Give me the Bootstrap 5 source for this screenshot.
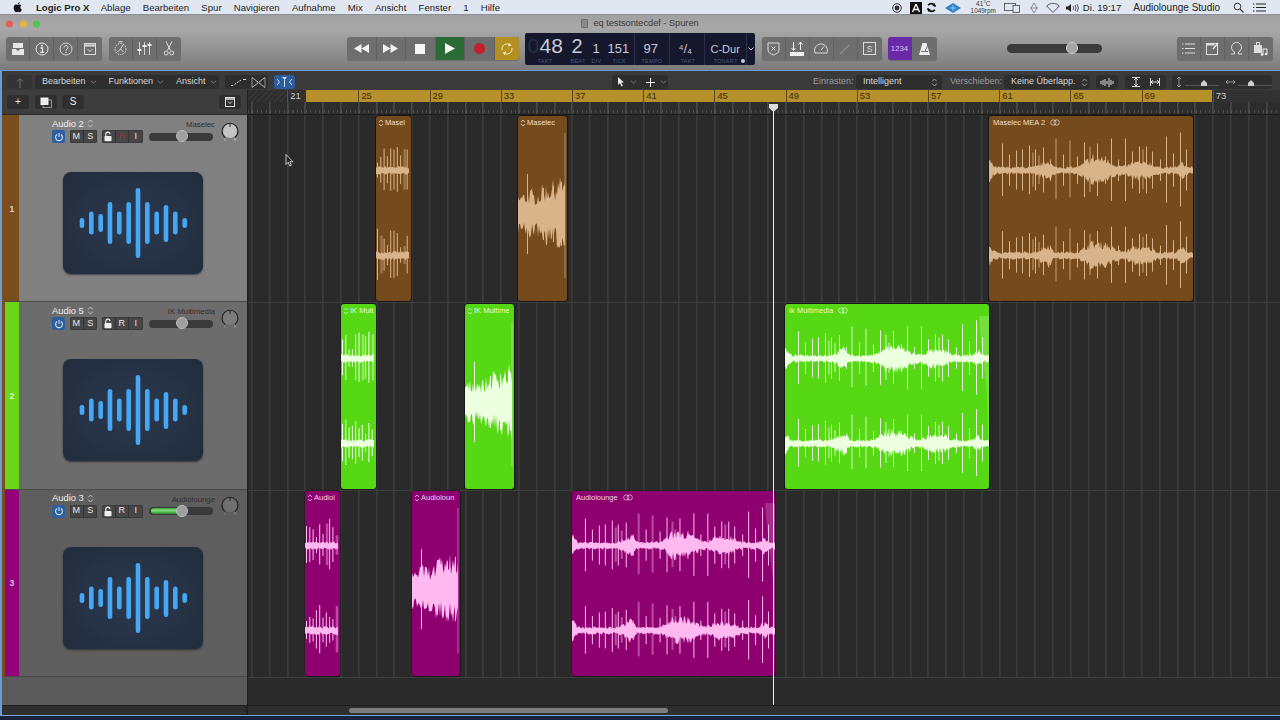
<!doctype html>
<html lang="de"><head><meta charset="utf-8"><title>Logic Pro X</title>
<link href="https://cdn.jsdelivr.net/npm/bootstrap@5.3.0/dist/css/bootstrap.min.css" rel="stylesheet">
<style>
html,body{height:720px;overflow:hidden;margin:0;background:#16233a}
body{font-family:"Liberation Sans",Arial,sans-serif;font-size:10px;color:#eee}
.lp-app{width:1280px;height:720px}
svg{display:block;flex:none}
.lp-menu{height:15px;background:#e1e7f1;color:#222;font-size:9.6px;border-bottom:1px solid #8b8f99;line-height:14px;padding-top:1px;flex:none}
.lp-menu b{font-weight:700;margin-right:11.4px}
.lp-apple{margin:-1px 12px 0 12px}
.lp-mi{margin-right:12.2px;white-space:nowrap}
.lp-temp{font-size:6.4px;line-height:7px;color:#333;margin:-1px 8px 0 10px}
.lp-tbar{height:55px;background:linear-gradient(#a0a0a0,#a9a9a9 22%,#949494 60%,#7b7b7b);flex:none}
.lp-titlerow{height:17px;padding-top:1px}
.lp-lights{gap:6.5px;padding-left:6px}
.lp-light{width:7px;height:7px;border-radius:50%}
.lp-title{font-size:9.2px;color:#3a3a3a;gap:5px}
.lp-doc{width:7px;height:9px;background:#8a8a8a;border:1px solid #6f6f6f;border-radius:1px}
.lp-mainrow{height:33px}
.lp-grp{background:#6e6e6e;border-radius:3px;height:23px;box-shadow:0 1px 1px rgba(0,0,0,.2);overflow:hidden}
.lp-tb{width:24px;height:23px;display:flex;align-items:center;justify-content:center;border-right:1px solid #626262;flex:none}
.lp-tb:last-child{border-right:0}
.lp-t2{width:29.5px}
.lp-play{background:#2b6b36}
.lp-cyc{background:#b48f22;width:24px}
.lp-lcd{width:230px;height:32px;background:#15182c;border-radius:2px;margin:0 7px 0 6px;color:#c6cbd8;position:relative}
.lp-cell{position:relative;height:100%;border-right:1px solid #2a2e48;flex:none}
.lp-cell:last-child{border-right:0}
.lp-big{position:absolute;top:3px;line-height:20px;white-space:nowrap}
.lp-lab{position:absolute;top:25.5px;font-size:5.6px;line-height:6px;color:#4e5675;letter-spacing:.2px;white-space:nowrap}
.lp-dot{position:absolute;left:36px;top:26px;width:4px;height:4px;border-radius:50%;background:#c6cbd8}
.lp-purple{background:#6a2aa8;color:#d9c4f2;font-size:7.8px;width:24px;height:23px;display:flex;align-items:center;justify-content:center}
.lp-master{width:95px;height:9px;border-radius:5px;background:#3b3b3b;margin-left:70px;margin-right:75px;position:relative}
.lp-knob{position:absolute;width:12px;height:12px;border-radius:50%;background:#a5a5a5;border:1px solid #d0d0d0;top:-2px}
.lp-win{flex:1 1 auto;min-height:0;border-top:1px solid #6e9bd2;border-left:2px solid #6e9bd2;border-bottom:1px solid #7aa4d8;background:#3a3a3a}
.lp-cbar{height:19px;background:#3a3a3a;font-size:9px;color:#d8d8d8;flex:none;padding-top:3px}
.lp-cg{background:#2e2e2e;border-radius:3px;height:14px;padding:0 6px;gap:5px;flex:none;white-space:nowrap}
.lp-dim{color:#9a9a9a}
.lp-cblue{background:#2c5c9c;width:21px;padding:0;justify-content:center}
.lp-cv{color:#8a8a8a}
.lp-left{width:245px;flex:none}
.lp-right{flex:1 1 auto;min-width:0;background:#292929;border-left:1px solid #1f1f1f}
.lp-hbar{height:25px;background:#3d3d3d;padding:0 5px;flex:none;border-bottom:1px solid #2a2a2a}
.lp-hbtn{width:22px;height:14px;background:#2f2f2f;border-radius:3px;color:#eee;font-size:10px;line-height:14px;text-align:center;flex:none}
.lp-tracks{border-left:3px solid #7a4e1c}
.lp-trk{height:187.33px;border-bottom:1px solid #4a4a4a;flex:none}
.lp-strip{width:14px;flex:none;font-size:8.6px;font-weight:700;color:rgba(255,255,255,.75);padding-top:2px}
.lp-s1{background:#7a4e1c}.lp-s2{background:#6bd618}.lp-s3{background:#93007a}
.lp-b1{background:#808080}.lp-b2{background:#6c6c6c}.lp-b3{background:#5e5e5e}
.lp-tbody{flex:1 1 auto;min-width:0;padding:2px 6px 0 33px}
.lp-tname{font-size:9.4px;line-height:12px;color:#eee;gap:3px}
.lp-srow{width:163px}
.lp-tsrc{font-size:7.8px;color:#2f2f2f;line-height:11px;margin-top:2px;white-space:nowrap;text-align:right}
.lp-hb{background:#464646;height:13px;border-radius:2px;box-shadow:0 0 0 1px #3a3a3a inset;overflow:hidden;flex:none}
.lp-hb span{display:flex;align-items:center;justify-content:center;width:13.5px;height:13px;font-size:9px;color:#e6e6e6;border-right:1px solid #333}
.lp-hb span:last-child{border-right:0}
.lp-pw{background:#2d5f9e;width:13px;height:13px;border-radius:2px;display:flex;align-items:center;justify-content:center;flex:none}
.lp-fader{width:64px;height:8px;background:#3a3a3a;border-radius:4px;position:relative;margin-left:1px;flex:none}
.lp-fader .lp-knob{left:27px;top:-2.5px;background:#9f9f9f;border-color:#bdbdbd}
.lp-meter{position:absolute;left:2px;top:1px;height:6px;width:29px;background:linear-gradient(#3f9f40,#7fe07a 40%,#2e8a33);border-radius:3px}
.lp-pan{width:20px;height:20px;margin-left:2px;margin-top:-11px;margin-bottom:1px;flex:none}
.lp-art{width:140px;height:102px;border-radius:8px;background:radial-gradient(#2c3a50,#212c3c);box-shadow:0 1px 2px rgba(0,0,0,.5);margin:29px 0 0 11px;flex:none}
.lp-tail{height:28px;background:#5a5a5a;flex:none}
.lp-rtop{height:12px;background:#323232;position:relative;flex:none;overflow:hidden}
.lp-hatch{position:absolute;left:0;top:0;width:58px;height:12px;background:repeating-linear-gradient(135deg,#2d2d2d 0 2px,#353535 2px 4px)}
.lp-gold{position:absolute;left:58px;width:906px;top:0;height:12px;background:#b6902a}
.lp-num{position:absolute;top:0;font-size:9.4px;line-height:12px;color:#3a2c05;padding-left:2px;border-left:1px solid #5a4712;height:12px}
.lp-num.lp-off{color:#ccc;border-color:#555}
.lp-rbot{height:13px;flex:none;background:repeating-linear-gradient(90deg,#5a5a5a 0 1px,transparent 1px 17.8px) 3.4px 0,repeating-linear-gradient(90deg,#4c4c4c 0 1px,transparent 1px 4.45px) 0 8px/100% 3px no-repeat,#2d2d2d;border-bottom:1px solid #1c1c1c}
.lp-arr{position:relative;flex:1 1 auto;min-height:0;background:#2a2a2a}
.lp-grid{position:absolute;left:0;right:0;top:0;height:562px;background:repeating-linear-gradient(90deg,#464646 0 1px,transparent 1px 17.8px) 3.4px 0}
.lp-sep{position:absolute;left:0;right:0;height:1px;background:#3e3e3e}
.lp-lane{position:absolute;left:0;right:0}
.lp-reg{position:absolute;top:1px;bottom:1px;border-radius:3px;box-shadow:0 0 0 1px rgba(0,0,0,.45);overflow:hidden;font-size:7.5px;line-height:11px;color:rgba(255,255,255,.85);white-space:nowrap}
.lp-reg>svg{position:absolute;left:0;top:0}
.lp-rname{position:absolute;left:2px;top:1px;gap:1px;z-index:1}
.lp-wname{left:4px}
.lp-rs1{background:#754b1d}.lp-rs2{background:#57d814}.lp-rs3{background:#8e0070}
.lp-play-line{position:absolute;left:525px;width:1px;top:-11px;bottom:0;background:#eee;z-index:3}
.lp-cap{position:absolute;left:520.5px;top:-11px;z-index:4}
.lp-cursor{position:absolute;left:37px;top:39px;z-index:5}
.lp-scroll{height:10px;background:#2f2f2f;flex:none;border-top:1px solid #1f1f1f;position:relative}
.lp-thumb{position:absolute;left:101px;width:319px;top:2px;height:5px;border-radius:3px;background:#7d7d7d}
.lp-sleft{width:245px;flex:none;height:10px;background:#2f2f2f;border-top:1px solid #1f1f1f;border-right:1px solid #1f1f1f}
.lp-foot{height:4px;background:#16233a;flex:none}
</style></head><body>
<svg width="0" height="0" style="position:absolute"><defs>
<symbol id="lp-art" viewBox="0 0 140 102"><g fill="#46a8f4"><rect x="16.7" y="46" width="4.6" height="10" rx="2.3"/><rect x="26" y="39.5" width="4.6" height="23" rx="2.3"/><rect x="35.4" y="42" width="4.6" height="18" rx="2.3"/><rect x="44.7" y="30" width="4.6" height="42" rx="2.3"/><rect x="54" y="39.5" width="4.6" height="23" rx="2.3"/><rect x="63.4" y="30" width="4.6" height="42" rx="2.3"/><rect x="72.7" y="16" width="4.6" height="70" rx="2.3"/><rect x="82" y="30" width="4.6" height="42" rx="2.3"/><rect x="91.4" y="39.5" width="4.6" height="23" rx="2.3"/><rect x="100.7" y="33" width="4.6" height="37" rx="2.3"/><rect x="110" y="39.5" width="4.6" height="23" rx="2.3"/><rect x="119.4" y="46" width="4.6" height="10" rx="2.3"/></g></symbol>
<symbol id="lp-ud" viewBox="0 0 7 9"><path d="M1.2 3.4 3.5 1l2.3 2.4M1.2 5.600 3.500 8l2.300-2.400" fill="none" stroke="currentColor" stroke-width=".9"/></symbol>
<symbol id="lp-pwr" viewBox="0 0 10 10"><path d="M3 2.500a3.400 3.400 0 1 0 4 0M5 1v4" fill="none" stroke="#cfe2ff" stroke-width="1.100"/></symbol>
<symbol id="lp-lock" viewBox="0 0 10 11"><rect x="1.500" y="5" width="7" height="5.200" rx=".8" fill="#eee"/><path d="M2.800 5V3.200a2.100 2.100 0 0 1 4.200 0" fill="none" stroke="#eee" stroke-width="1.100"/></symbol>
<symbol id="lp-loop" viewBox="0 0 12 8"><circle cx="4" cy="4" r="3.200" fill="none" stroke="currentColor" stroke-width=".8"/><circle cx="8" cy="4" r="3.200" fill="none" stroke="currentColor" stroke-width=".8"/></symbol>
<symbol id="lp-cvd" viewBox="0 0 7 4"><path d="m.8.700 2.700 2.400L6.200.7" fill="none" stroke="currentColor" stroke-width=".8"/></symbol>
</defs></svg>

<div class="lp-app d-flex flex-column">
<div class="lp-menu d-flex align-items-center">
<svg class="lp-apple" width="12" height="12" viewBox="0 0 16 16"><path fill="#111" d="M11.2 8.500c0-1.600 1.300-2.300 1.400-2.400-.8-1.100-1.900-1.300-2.400-1.300-1-.1-2 .6-2.500.6s-1.300-.6-2.200-.6c-1.100 0-2.200.7-2.800 1.700-1.200 2-.3 5 .9 6.700.6.800 1.200 1.700 2.100 1.700.8 0 1.200-.5 2.200-.5s1.300.5 2.200.5 1.500-.8 2.100-1.700c.7-1 .9-1.900 1-2-.1 0-1.900-.7-2-2.700zM9.600 3.600c.4-.6.8-1.300.7-2.100-.7 0-1.500.4-2 1-.4.500-.8 1.300-.7 2 .8.100 1.500-.3 2-.9z"/></svg>
<b>Logic Pro X</b><span class="lp-mi">Ablage</span><span class="lp-mi">Bearbeiten</span><span class="lp-mi">Spur</span><span class="lp-mi">Navigieren</span><span class="lp-mi">Aufnahme</span><span class="lp-mi">Mix</span><span class="lp-mi">Ansicht</span><span class="lp-mi">Fenster</span><span class="lp-mi">1</span><span class="lp-mi">Hilfe</span>
<div class="ms-auto d-flex align-items-center">
<svg width="10" height="10" viewBox="0 0 10 10" class="me-2"><circle cx="5" cy="5" r="4.300" fill="none" stroke="#333"/><circle cx="5" cy="5" r="2.400" fill="#333"/></svg>
<svg width="12" height="12" viewBox="0 0 12 12" class="me-1"><rect width="12" height="12" fill="#111"/><path d="M6 2 2.500 10M6 2l3.500 8M3.800 7.500h4.400" stroke="#fff" stroke-width="1.300" fill="none"/></svg>
<svg width="11" height="11" viewBox="0 0 12 12" class="me-2"><path d="M10 5a4.300 4.300 0 0 0-7.600-1.400M2 7a4.300 4.300 0 0 0 7.600 1.400" stroke="#111" stroke-width="2" fill="none"/><path d="m9 1 2 4-4-.6zM3 11 1 7l4 .6z" fill="#111"/></svg>
<svg width="16" height="10" viewBox="0 0 16 10"><path d="M8 0l8 5-8 5-8-5z" fill="#2f80c8"/><path d="M8 2v6M5 5h6" stroke="#bfe0ff" stroke-width=".7"/></svg>
<div class="lp-temp"><div class="text-center">41°C</div><div>1049rpm</div></div>
<svg width="16" height="10" viewBox="0 0 16 10" class="me-2"><rect x=".5" y=".5" width="11" height="7" fill="none" stroke="#444" stroke-width=".8"/><rect x="9" y="2.500" width="6.500" height="7" fill="#e1e7f1" stroke="#444" stroke-width=".8"/></svg>
<svg width="8" height="10" viewBox="0 0 8 10" class="me-2" style="margin-left:2px"><path d="M4 0 7 5 4 10 1 5z" fill="none" stroke="#777" stroke-width=".8"/><path d="M0 5h8" stroke="#777" stroke-width=".8"/></svg>
<svg width="14" height="10" viewBox="0 0 14 10" class="me-1"><path d="M.7 3 7 9.500 13.300 3C9.500-.5 4.500-.5.700 3z" fill="none" stroke="#333" stroke-width=".8"/></svg>
<svg width="14" height="10" viewBox="0 0 14 10" style="margin-left:2px;margin-right:3px"><path d="M0 3.500h2L5 1v8L2 6.500H0z" fill="#222"/><path d="M7 3a3 3 0 0 1 0 4M9 2a5 5 0 0 1 0 6M11 1a7 7 0 0 1 0 8" fill="none" stroke="#333" stroke-width=".8"/></svg>
<span class="lp-mi" style="margin-right:12px">Di. 19:17</span>
<span style="margin-right:13px;white-space:nowrap;font-size:10px">Audiolounge Studio</span>
<svg width="11" height="11" viewBox="0 0 11 11" style="margin-right:9px"><circle cx="4.500" cy="4.500" r="3.300" fill="none" stroke="#333"/><path d="m7 7 3.500 3.500" stroke="#333" stroke-width="1.100"/></svg>
<svg width="13" height="9" viewBox="0 0 13 9" style="margin-right:14px"><path d="M0 1h1.500M3 1h10M0 4.500h1.500M3 4.500h10M0 8h1.500M3 8h10" stroke="#222"/></svg>
</div></div>

<div class="lp-tbar">
<div class="lp-titlerow d-flex align-items-center position-relative">
<div class="lp-lights d-flex position-absolute top-50 start-0 translate-middle-y">
<div class="lp-light" style="background:#ee5a52"></div><div class="lp-light" style="background:#e8b33c"></div><div class="lp-light" style="background:#4fc648"></div></div>
<div class="lp-title d-flex align-items-center mx-auto"><span class="lp-doc"></span>eq testsontecdef - Spuren</div>
</div>
<div class="lp-mainrow d-flex align-items-center" style="padding-left:6px">
<div class="lp-grp d-flex">
<div class="lp-tb"><svg width="14" height="14" viewBox="0 0 14 14"><path d="M2 1h10v5H2z M1 7h4l1 1.500h2L9 7h4v6H1z" fill="#e6e6e6"/></svg></div>
<div class="lp-tb"><svg width="14" height="14" viewBox="0 0 14 14"><circle cx="7" cy="7" r="6" fill="none" stroke="#e6e6e6"/><path d="M5.500 6h2v4M5 10.300h4.200" stroke="#e6e6e6" stroke-width="1.300" fill="none"/><circle cx="7" cy="3.800" r="1" fill="#e6e6e6"/></svg></div>
<div class="lp-tb"><svg width="14" height="14" viewBox="0 0 14 14"><circle cx="7" cy="7" r="6" fill="none" stroke="#ddd" stroke-width=".9"/><path d="M5 5.500a2 2 0 1 1 3 1.700c-.7.400-1 .8-1 1.500" fill="none" stroke="#ddd"/><circle cx="7" cy="10.500" r=".7" fill="#ddd"/></svg></div>
<div class="lp-tb"><svg width="14" height="14" viewBox="0 0 14 14"><rect x="1.500" y="1.500" width="11" height="11" fill="none" stroke="#ddd"/><path d="M1.500 3.500h11" stroke="#ddd" stroke-width="2"/><path d="m4.500 7 2.500 2.500L9.500 7" stroke="#ddd" fill="none"/></svg></div>
</div>
<div class="lp-grp d-flex" style="margin-left:7px">
<div class="lp-tb"><svg width="15" height="15" viewBox="0 0 15 15"><circle cx="7.500" cy="8" r="5.500" fill="none" stroke="#ddd" stroke-dasharray="1.500 1"/><path d="M4.500 11 7.500 8l3 3M7.500 8l3-4.500M5.500 .8h4" stroke="#ddd" fill="none"/></svg></div>
<div class="lp-tb"><svg width="15" height="13" viewBox="0 0 15 13"><path d="M2.500 0v13M7.500 0v13M12.500 0v13" stroke="#ddd" stroke-width=".9"/><path d="M.5 8h4M5.500 4h4M10.500 3h4" stroke="#eee" stroke-width="1.800"/></svg></div>
<div class="lp-tb"><svg width="12" height="15" viewBox="0 0 12 15"><path d="M3 .5 7.500 9.500M9 .5 4.500 9.500" stroke="#ddd"/><circle cx="3.200" cy="12" r="2" fill="none" stroke="#ddd"/><circle cx="8.800" cy="12" r="2" fill="none" stroke="#ddd"/></svg></div>
</div>
<div class="lp-grp d-flex" style="margin-left:166px">
<div class="lp-tb lp-t2"><svg width="15" height="9" viewBox="0 0 15 9"><path d="M7.500 0v9L0 4.500zM15 0v9L7.500 4.500z" fill="#f2f2f2"/></svg></div>
<div class="lp-tb lp-t2"><svg width="15" height="9" viewBox="0 0 15 9"><path d="M0 0v9l7.500-4.500zM7.500 0v9L15 4.500z" fill="#f2f2f2"/></svg></div>
<div class="lp-tb lp-t2"><svg width="10" height="10" viewBox="0 0 10 10"><rect width="10" height="10" fill="#f6f6f6"/></svg></div>
<div class="lp-tb lp-t2 lp-play"><svg width="10" height="11" viewBox="0 0 10 11"><path d="M0 0v11l10-5.500z" fill="#f6f6f6"/></svg></div>
<div class="lp-tb lp-t2"><svg width="11" height="11" viewBox="0 0 11 11"><circle cx="5.500" cy="5.500" r="5.500" fill="#c2202c"/></svg></div>
<div class="lp-tb lp-cyc"><svg width="14" height="14" viewBox="0 0 14 14"><path d="M2 8a5 5 0 0 1 8-5M12 6a5 5 0 0 1-8 5" fill="none" stroke="#f2e6b8"/><path d="m9 .8 2.500 2.700L8 4.500zM5 13.200 2.500 10.500 6 9.500z" fill="#f2e6b8"/></svg></div>
</div>
<div class="lp-lcd d-flex">
<div class="lp-cell" style="width:110px">
<span class="lp-big" style="left:3px;font-size:21px;color:#282c44">0</span>
<span class="lp-big" style="left:15px;font-size:21px">48</span><span class="lp-lab" style="left:13px">TAKT</span>
<span class="lp-big" style="left:47px;font-size:20px">2</span><span class="lp-lab" style="left:46px">BEAT</span>
<span class="lp-big" style="left:68px;font-size:13px;top:6px">1</span><span class="lp-lab" style="left:67px">DIV</span>
<span class="lp-big" style="left:83px;font-size:13px;top:6px">151</span><span class="lp-lab" style="left:88px">TICK</span>
</div>
<div class="lp-cell" style="width:35px"><span class="lp-big" style="left:9px;font-size:13px;top:6px">97</span><span class="lp-lab" style="left:7px">TEMPO</span></div>
<div class="lp-cell" style="width:35px"><span class="lp-big" style="left:9px;font-size:12px;top:6px">⁴/₄</span><span class="lp-lab" style="left:11px">TAKT</span></div>
<div class="lp-cell" style="width:42px"><span class="lp-big" style="left:6px;font-size:11px;top:6px">C-Dur</span><span class="lp-lab" style="left:9px">TONART</span><span class="lp-dot"></span></div>
<div class="lp-cell d-flex align-items-center justify-content-center flex-grow-1"><svg width="6" height="4" viewBox="0 0 6 4"><path d="m.5.500 2.500 2.500L5.500.5" fill="none" stroke="#ccc"/></svg></div>
</div>
<div class="lp-grp d-flex">
<div class="lp-tb"><svg width="13" height="14" viewBox="0 0 13 14"><path d="M1 1h11v7c0 3-3 4-5.500 5C4 12 1 11 1 8z" fill="none" stroke="#ddd"/><path d="m4.500 4.500 4 4M8.500 4.500l-4 4" stroke="#ddd"/></svg></div>
<div class="lp-tb"><svg width="14" height="14" viewBox="0 0 14 14"><path d="M3.500 0v8M10.500 0v8M1.500 6l2 2.500 2-2.500M8.500 2.500l2-2.500 2 2.500" stroke="#eee" fill="none"/><rect y="10" width="14" height="4" fill="#f2f2f2"/></svg></div>
<div class="lp-tb"><svg width="14" height="13" viewBox="0 0 14 13"><path d="M1 11a6.500 6.500 0 1 1 12 0z" fill="none" stroke="#ddd"/><path d="m7 8 3-3.500" stroke="#ddd"/></svg></div>
<div class="lp-tb"><svg width="12" height="12" viewBox="0 0 12 12"><path d="M1 11 10 2" stroke="#8e8e8e" stroke-width="1.200"/></svg></div>
<div class="lp-tb"><svg width="13" height="13" viewBox="0 0 13 13"><rect x=".5" y=".5" width="12" height="12" fill="none" stroke="#ddd"/><text x="6.500" y="9.800" text-anchor="middle" font-size="8.500" fill="#ddd" font-family="Liberation Sans">S</text></svg></div>
</div>
<div class="lp-grp d-flex" style="margin-left:6px">
<div class="lp-purple">1234</div>
<div class="lp-tb" style="width:25px"><svg width="13" height="14" viewBox="0 0 13 14"><path d="M4.500 1h4l3.500 12H1z" fill="#eee"/><path d="M6.500 10 10.500 2" stroke="#6f6f6f" stroke-width="1"/><rect x="3" y="9" width="7" height="1" fill="#6f6f6f"/></svg></div>
</div>
<div class="lp-master"><div class="lp-knob" style="left:59px"></div></div>
<div class="lp-grp d-flex">
<div class="lp-tb"><svg width="13" height="11" viewBox="0 0 13 11"><path d="M0 1h1.500M3 1h10M0 5.500h1.500M3 5.500h10M0 10h1.500M3 10h10" stroke="#ddd"/></svg></div>
<div class="lp-tb"><svg width="13" height="13" viewBox="0 0 13 13"><rect x=".5" y="1.500" width="11" height="11" fill="none" stroke="#ddd"/><path d="M.5 2.500h8" stroke="#ddd" stroke-width="2"/><path d="m7 7 5-6" stroke="#eee" stroke-width="1.300"/></svg></div>
<div class="lp-tb"><svg width="13" height="13" viewBox="0 0 13 13"><path d="M1 12h3.500V10a5 5 0 1 1 4 0v2H12" fill="none" stroke="#ddd"/></svg></div>
<div class="lp-tb"><svg width="15" height="14" viewBox="0 0 15 14"><rect x="1" y="3" width="8" height="8" fill="#ddd"/><rect x="3.500" y=".5" width="3" height="3" fill="none" stroke="#ddd"/><path d="M10 13V7h4v5" fill="none" stroke="#eee"/><circle cx="9" cy="12.500" r="1.300" fill="#eee"/><circle cx="13" cy="12" r="1.300" fill="#eee"/></svg></div>
</div>
</div></div>

<div class="lp-win d-flex flex-column">
<div class="lp-cbar d-flex align-items-center">
<div class="lp-cg d-flex align-items-center" style="margin-left:5px;width:25px;background:#343434;justify-content:center;padding:0"><svg width="9" height="11" viewBox="0 0 9 11"><path d="M5 11V2M2 4.500 5 1.500l3 3" stroke="#6f6f6f" fill="none"/></svg></div>
<div class="lp-cg d-flex align-items-center" style="margin-left:3px;width:184px;padding:0 7px;gap:4px"><span>Bearbeiten</span><svg class="lp-cv" width="7" height="4"><use href="#lp-cvd"/></svg><span style="margin-left:8px">Funktionen</span><svg class="lp-cv" width="7" height="4"><use href="#lp-cvd"/></svg><span style="margin-left:8px">Ansicht</span><svg class="lp-cv" width="7" height="4"><use href="#lp-cvd"/></svg></div>
<div class="lp-cg d-flex align-items-center" style="margin-left:6px;width:43px"><svg width="15" height="9" viewBox="0 0 15 9"><path d="M0 7.500h2M3.500 6.500 10 2" stroke="#ddd" stroke-dasharray="2 1"/><path d="M12 1.500h3" stroke="#ddd"/></svg><svg width="15" height="11" viewBox="0 0 15 11"><path d="M1 .5v10l13-10v10zM1 .5l13 10M1 10.500 14 .5" fill="none" stroke="#aaa" stroke-width=".8"/></svg></div>
<div class="lp-cg lp-cblue d-flex align-items-center" style="margin-left:6px"><svg width="15" height="10" viewBox="0 0 15 10"><path d="M0 2l2.500 3L0 8M15 2l-2.500 3L15 8M7.500 3v7" stroke="#cfe2ff" fill="none"/><path d="M5 0h5L7.500 3z" fill="#cfe2ff"/></svg></div>
<div class="lp-cg d-flex align-items-center" style="margin-left:317px;width:56px;padding:0 5px"><svg width="8" height="10" viewBox="0 0 8 10"><path d="M1 0v8l2-2 1.500 3.500 1.300-.5L4.300 5.500 7 5.500z" fill="#eee"/></svg><svg class="lp-cv" width="7" height="4"><use href="#lp-cvd"/></svg><svg class="ms-1" width="9" height="9" viewBox="0 0 9 9"><path d="M4.500 0v9M0 4.500h9" stroke="#eee"/></svg><svg class="lp-cv" width="7" height="4"><use href="#lp-cvd"/></svg></div>
<span class="lp-dim" style="margin-left:145px;width:43px;white-space:nowrap">Einrasten:</span>
<div class="lp-cg d-flex align-items-center justify-content-between" style="width:86px;padding:0 4px 0 7px"><span>Intelligent</span><svg width="7" height="9" style="color:#aaa"><use href="#lp-ud"/></svg></div>
<span class="lp-dim" style="margin-left:8px;width:54px;white-space:nowrap">Verschieben:</span>
<div class="lp-cg d-flex align-items-center justify-content-between" style="width:86px;padding:0 4px 0 7px"><span>Keine Überlapp.</span><svg width="7" height="9" style="color:#aaa"><use href="#lp-ud"/></svg></div>
<div class="lp-cg d-flex align-items-center justify-content-center" style="margin-left:6px;width:22px;padding:0"><svg width="15" height="9" viewBox="0 0 15 9"><path d="M1 3v3M3 2v5M5 1v7M7 3v3M9 0v9M11 2v5M13 3v3" stroke="#ddd"/></svg></div>
<div class="lp-cg d-flex align-items-center justify-content-between" style="margin-left:7px;width:41px;padding:0 6px"><svg width="10" height="10" viewBox="0 0 10 10"><path d="M1 .5h8M1 9.500h8M5 1v8M3 3l2-2 2 2M3 7l2 2 2-2" stroke="#eee" fill="none" stroke-width=".9"/></svg><svg width="10" height="10" viewBox="0 0 10 10"><path d="M.5 1v8M9.500 1v8M1 5h8M3 3 1 5l2 2M7 3l2 2-2 2" stroke="#eee" fill="none" stroke-width=".9"/></svg></div>
<div class="lp-cg d-flex align-items-center" style="margin-left:6px;width:100px;padding:0 4px;gap:3px">
<svg width="6" height="10" viewBox="0 0 6 10"><path d="M3 0v10M1 2l2-2 2 2M1 8l2 2 2-2" stroke="#aaa" fill="none" stroke-width=".8"/></svg>
<svg width="34" height="9" viewBox="0 0 34 9"><path d="M0 7.500h34" stroke="#555"/><path d="M19 2l3 3v3h-6V5z" fill="#cfcfcf"/></svg>
<svg width="9" height="6" viewBox="0 0 9 6" style="margin-left:4px"><path d="M0 3h9M2 1 0 3l2 2M7 1l2 2-2 2" stroke="#aaa" fill="none" stroke-width=".8"/></svg>
<svg width="34" height="9" viewBox="0 0 34 9"><path d="M0 7.500h34" stroke="#555"/><path d="M13 2l3 3v3h-6V5z" fill="#cfcfcf"/></svg>
</div>
</div>

<div class="d-flex flex-grow-1" style="min-height:0">
<div class="lp-left d-flex flex-column">
<div class="lp-hbar d-flex align-items-center gap-2">
<div class="lp-hbtn">+</div>
<div class="lp-hbtn d-flex align-items-center justify-content-center" style="margin-left:-2px"><svg width="12" height="11" viewBox="0 0 12 11"><rect x="3" y="3" width="8.500" height="7.500" fill="none" stroke="#9a9a9a"/><rect x=".5" y=".5" width="8" height="7.500" fill="#eee"/></svg></div>
<div class="lp-hbtn" style="margin-left:-3px">S</div>
<div class="lp-hbtn d-flex align-items-center justify-content-center ms-auto" style="margin-right:1px"><svg width="10" height="10" viewBox="0 0 10 10"><rect x=".5" y=".5" width="9" height="9" fill="none" stroke="#ddd"/><path d="M.5 2h9" stroke="#ddd" stroke-width="1.500"/><path d="m3 4.500 2 2 2-2" stroke="#ddd" fill="none"/></svg></div>
</div>
<div class="lp-tracks">
<div class="lp-trk d-flex">
<div class="lp-strip lp-s1 d-flex align-items-center justify-content-center">1</div>
<div class="lp-tbody lp-b1">
<div class="lp-srow d-flex justify-content-between"><div class="lp-tname d-flex align-items-center">Audio 2 <svg width="7" height="9" style="color:#ccc"><use href="#lp-ud"/></svg></div><div class="lp-tsrc">Maselec</div></div>
<div class="d-flex align-items-center" style="gap:5px">
<div class="lp-pw"><svg width="10" height="10"><use href="#lp-pwr"/></svg></div>
<div class="lp-hb d-flex"><span>M</span><span>S</span></div>
<div class="lp-hb d-flex"><span><svg width="10" height="11"><use href="#lp-lock"/></svg></span><span style="color:#a82a35">R</span><span>I</span></div>
<div class="lp-fader"><div class="lp-knob"></div></div>
<svg class="lp-pan" viewBox="0 0 20 20"><path d="M5 16.500a8 8 0 1 1 10 0" fill="none" stroke="#222" stroke-width="1.200"/><circle cx="10" cy="10" r="7" fill="#c4c4c4"/><path d="M10 2.500V6" stroke="#222"/><text x="5" y="19.800" font-size="3.600" fill="#ddd" text-anchor="middle">L</text><text x="15" y="19.800" font-size="3.600" fill="#ddd" text-anchor="middle">R</text></svg>
</div>
<svg class="lp-art"><use href="#lp-art"/></svg>
</div></div>
<div class="lp-trk d-flex">
<div class="lp-strip lp-s2 d-flex align-items-center justify-content-center">2</div>
<div class="lp-tbody lp-b2">
<div class="lp-srow d-flex justify-content-between"><div class="lp-tname d-flex align-items-center">Audio 5 <svg width="7" height="9" style="color:#ccc"><use href="#lp-ud"/></svg></div><div class="lp-tsrc">IK Multimedia</div></div>
<div class="d-flex align-items-center" style="gap:5px">
<div class="lp-pw"><svg width="10" height="10"><use href="#lp-pwr"/></svg></div>
<div class="lp-hb d-flex"><span>M</span><span>S</span></div>
<div class="lp-hb d-flex"><span><svg width="10" height="11"><use href="#lp-lock"/></svg></span><span>R</span><span>I</span></div>
<div class="lp-fader"><div class="lp-knob"></div></div>
<svg class="lp-pan" viewBox="0 0 20 20"><path d="M5 16.500a8 8 0 1 1 10 0" fill="none" stroke="#222" stroke-width="1.200"/><circle cx="10" cy="10" r="7" fill="#7c7c7c"/><path d="M10 2.500V6" stroke="#222"/><text x="5" y="19.800" font-size="3.600" fill="#aaa" text-anchor="middle">L</text><text x="15" y="19.800" font-size="3.600" fill="#aaa" text-anchor="middle">R</text></svg>
</div>
<svg class="lp-art"><use href="#lp-art"/></svg>
</div></div>
<div class="lp-trk d-flex">
<div class="lp-strip lp-s3 d-flex align-items-center justify-content-center">3</div>
<div class="lp-tbody lp-b3">
<div class="lp-srow d-flex justify-content-between"><div class="lp-tname d-flex align-items-center">Audio 3 <svg width="7" height="9" style="color:#ccc"><use href="#lp-ud"/></svg></div><div class="lp-tsrc">Audiolounge</div></div>
<div class="d-flex align-items-center" style="gap:5px">
<div class="lp-pw"><svg width="10" height="10"><use href="#lp-pwr"/></svg></div>
<div class="lp-hb d-flex"><span>M</span><span>S</span></div>
<div class="lp-hb d-flex"><span><svg width="10" height="11"><use href="#lp-lock"/></svg></span><span>R</span><span>I</span></div>
<div class="lp-fader"><div class="lp-meter"></div><div class="lp-knob"></div></div>
<svg class="lp-pan" viewBox="0 0 20 20"><path d="M5 16.500a8 8 0 1 1 10 0" fill="none" stroke="#222" stroke-width="1.200"/><circle cx="10" cy="10" r="7" fill="#707070"/><path d="M10 2.500V6" stroke="#222"/><text x="5" y="19.800" font-size="3.600" fill="#999" text-anchor="middle">L</text><text x="15" y="19.800" font-size="3.600" fill="#999" text-anchor="middle">R</text></svg>
</div>
<svg class="lp-art"><use href="#lp-art"/></svg>
</div></div>
</div>
<div class="lp-tail flex-grow-1"></div>
<div class="lp-sleft"></div>
</div>

<div class="lp-right d-flex flex-column">
<div class="lp-rtop"><div class="lp-hatch"></div><div class="lp-gold"></div><div id="lpRuler"></div></div>
<div class="lp-rbot"></div>
<div class="lp-arr">
<div class="lp-grid"></div>
<div class="lp-sep" style="top:187px"></div><div class="lp-sep" style="top:374.500px"></div><div class="lp-sep" style="top:562px"></div>
<div class="lp-lane" style="top:0;height:187px">
<div class="lp-reg lp-rs1" style="left:128px;width:35px" data-k="s" data-c="#d9b48a"><div class="lp-rname d-flex align-items-center"><svg width="6" height="8"><use href="#lp-ud"/></svg>Masel</div></div>
<div class="lp-reg lp-rs1" style="left:270px;width:49px" data-k="m" data-c="#d9b48a"><div class="lp-rname d-flex align-items-center"><svg width="6" height="8"><use href="#lp-ud"/></svg>Maselec</div></div>
<div class="lp-reg lp-rs1" style="left:741px;width:204px" data-k="w" data-c="#d9b48a"><div class="lp-rname lp-wname d-flex align-items-center">Maselec MEA 2 <svg class="ms-1" width="10" height="7"><use href="#lp-loop"/></svg></div></div>
</div>
<div class="lp-lane" style="top:188px;height:186.500px">
<div class="lp-reg lp-rs2" style="left:93px;width:35px" data-k="s" data-c="#ecffdf"><div class="lp-rname d-flex align-items-center"><svg width="6" height="8"><use href="#lp-ud"/></svg>IK Mult</div></div>
<div class="lp-reg lp-rs2" style="left:217px;width:49px" data-k="m" data-c="#ecffdf"><div class="lp-rname d-flex align-items-center"><svg width="6" height="8"><use href="#lp-ud"/></svg>IK Multime</div></div>
<div class="lp-reg lp-rs2" style="left:537px;width:204px" data-k="w" data-c="#ecffdf" data-f="1"><div class="lp-rname lp-wname d-flex align-items-center">Ik Multimedia <svg class="ms-1" width="10" height="7"><use href="#lp-loop"/></svg></div></div>
</div>
<div class="lp-lane" style="top:375px;height:187px">
<div class="lp-reg lp-rs3" style="left:57px;width:35px" data-k="s" data-c="#ffb8f0"><div class="lp-rname d-flex align-items-center"><svg width="6" height="8"><use href="#lp-ud"/></svg>Audiol</div></div>
<div class="lp-reg lp-rs3" style="left:164px;width:48px" data-k="m" data-c="#ffb8f0"><div class="lp-rname d-flex align-items-center"><svg width="6" height="8"><use href="#lp-ud"/></svg>Audioloun</div></div>
<div class="lp-reg lp-rs3" style="left:324px;width:203px" data-k="w" data-c="#ffb8f0" data-f="1"><div class="lp-rname lp-wname d-flex align-items-center">Audiolounge <svg class="ms-1" width="10" height="7"><use href="#lp-loop"/></svg></div></div>
</div>
<div class="lp-play-line"></div>
<svg class="lp-cap" width="9" height="8" viewBox="0 0 9 8"><path d="M0 0h9v4L4.500 8 0 4z" fill="#ddd"/></svg>
<svg class="lp-cursor" width="9" height="13" viewBox="0 0 9 13"><path d="M1 .5v10l2.200-2.200 1.600 3.700 1.600-.7-1.600-3.500H8z" fill="#222" stroke="#eee" stroke-width=".8"/></svg>
</div>
<div class="lp-scroll"><div class="lp-thumb"></div></div>
</div>
</div>
</div>
<div class="lp-foot"></div>
</div>

<script src="https://cdn.jsdelivr.net/npm/bootstrap@5.3.0/dist/js/bootstrap.bundle.min.js"></script>
<script>
(function(){
var R=document.getElementById('lpRuler'),h='';
for(var b=21;b<=73;b+=4){var x=(b-21)*17.8+39.2;h+='<span class="lp-num'+((b==21||b==73)?' lp-off':'')+'" style="left:'+x.toFixed(1)+'px">'+b+'</span>';}
R.innerHTML=h;
var seed=7;function rnd(){seed=(seed*16807)%2147483647;return seed/2147483647;}
var SP=[[13,27],[20,16],[27,20],[33,21],[40,25],[44,18,1],[46,21],[50,15,1],[54,23],[61,11],[67,32,1],[74,16],[81,30,1],[88,14],[95,28],[101,24,1],[104,16,1],[108,27],[116,14],[122,32],[129,11],[136,32],[143,19],[150,24],[154,21,1],[157,24],[163,19],[171,11],[177,34],[184,17],[191,38],[197,21]];
var BUMP=[[0,6,4],[55,4,6],[60,5,3],[100,4,6],[112,8,14],[147,5,8],[160,4,6],[193,4,4]];
function env(x,W){var u=x*204/W,e=3.2;for(var i=0;i<BUMP.length;i++){var d=(u-BUMP[i][0])/BUMP[i][2];e+=BUMP[i][1]*Math.exp(-d*d);}return e;}
function band(W,cy,fn,lo,sp){lo=lo||.55;sp=sp||.75;var t='M0 '+cy,b='';for(var x=0;x<=W;x++){var a=fn(x)*(lo+rnd()*sp),c=fn(x)*(lo+rnd()*sp);t+='L'+x+' '+(cy-a).toFixed(1);b='L'+x+' '+(cy+c).toFixed(1)+b;}return t+b+'Z';}
document.querySelectorAll('.lp-reg').forEach(function(r){
 var W=r.offsetWidth,H=r.offsetHeight,k=r.dataset.k,c=r.dataset.c,o='';
 var cs=[54.5,139.5];
 if(k=='w'){
  cs.forEach(function(cy,ci){
   SP.forEach(function(s){var xx=s[0]*W/204;var top=s[1]*(ci?.9:1);
    if(s[2])o+='<rect x="'+(xx-1)+'" y="'+(cy-top)+'" width="2" height="'+(2*top*.95)+'" fill="'+c+'" opacity=".4"/>';
    else o+='<rect x="'+xx+'" y="'+(cy-top)+'" width="1" height="'+(top*1.95)+'" fill="'+c+'"/>';});
   o+='<path d="'+band(W,cy,function(x){return env(x,W);})+'" fill="'+c+'"/>';
  });
  if(r.dataset.f)o+='<path d="M'+(W-10)+' 12H'+W+'V'+(H-2)+'L'+(W-2)+' 90L'+(W-9)+' 25Z" fill="#fff" opacity=".18"/>';
 }else if(k=='s'){
  cs.forEach(function(cy,ci){
   for(var x=1;x<W-1;x+=3.3){var t=8+rnd()*19;
    if(rnd()<.2)o+='<rect x="'+x.toFixed(1)+'" y="'+(cy-t).toFixed(1)+'" width="2.500" height="'+(t*1.9).toFixed(1)+'" fill="'+c+'" opacity=".4"/>';
    else o+='<rect x="'+x.toFixed(1)+'" y="'+(cy-t).toFixed(1)+'" width="1" height="'+(t*1.9).toFixed(1)+'" fill="'+c+'"/>';}
   o+='<path d="'+band(W-2,cy,function(){return 3.500;})+'" fill="'+c+'"/>';
  });
 }else{
  var cy=98;
  o+='<rect x="'+(W-3)+'" y="17" width="2" height="'+(H-40)+'" fill="#fff" opacity=".18"/>';
  [9,25,35,43].forEach(function(x,i){var t=[40,26,28,32][i];o+='<rect x="'+x+'" y="'+(cy-t)+'" width="1" height="'+(2*t)+'" fill="'+c+'"/>';});
  o+='<path d="'+band(W-2,cy,function(x){return 15+x/W*15+(x>14&&x<24?-3:0);},.5,.85)+'" fill="'+c+'"/>';
 }
 r.insertAdjacentHTML('afterbegin','<svg width="'+W+'" height="'+H+'" viewBox="0 0 '+W+' '+H+'">'+o+'</svg>');
});
})();
</script>
</body></html>
